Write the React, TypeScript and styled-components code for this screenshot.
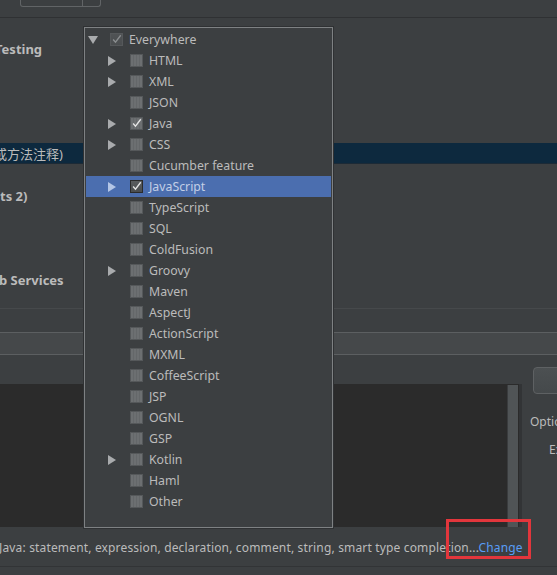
import React from 'react';
import styled, { createGlobalStyle } from 'styled-components';

const GlobalStyle = createGlobalStyle`
  html, body {
    margin: 0;
    padding: 0;
    background: #3c3f41;
  }
`;

type ScopeItem = {
  name: string;
  level: number;
  arrow?: 'right' | 'down';
  checked?: boolean;
  dim?: boolean;
  selected?: boolean;
};

const scopes: ScopeItem[] = [
  { name: 'Everywhere', level: 0, arrow: 'down', checked: true, dim: true },
  { name: 'HTML', level: 1, arrow: 'right' },
  { name: 'XML', level: 1, arrow: 'right' },
  { name: 'JSON', level: 1 },
  { name: 'Java', level: 1, arrow: 'right', checked: true },
  { name: 'CSS', level: 1, arrow: 'right' },
  { name: 'Cucumber feature', level: 1 },
  { name: 'JavaScript', level: 1, arrow: 'right', checked: true, selected: true },
  { name: 'TypeScript', level: 1 },
  { name: 'SQL', level: 1 },
  { name: 'ColdFusion', level: 1 },
  { name: 'Groovy', level: 1, arrow: 'right' },
  { name: 'Maven', level: 1 },
  { name: 'AspectJ', level: 1 },
  { name: 'ActionScript', level: 1 },
  { name: 'MXML', level: 1 },
  { name: 'CoffeeScript', level: 1 },
  { name: 'JSP', level: 1 },
  { name: 'OGNL', level: 1 },
  { name: 'GSP', level: 1 },
  { name: 'Kotlin', level: 1, arrow: 'right' },
  { name: 'Haml', level: 1 },
  { name: 'Other', level: 1 },
];

// 왼쪽 설정 트리 (팝업 뒤에 가려진 부분)
const treeRows: { text?: string; bold?: boolean; selected?: boolean; shift?: number }[] = [
  { text: 'Testing', bold: true, shift: -5 },
  {},
  {},
  {},
  {},
  { text: '或方法注释)', selected: true, shift: -6 },
  {},
  { text: 'ts 2)', bold: true, shift: 0 },
  {},
  {},
  {},
  { text: 'b Services', bold: true, shift: -1 },
];

const Arrow = ({ dir, light }: { dir?: 'right' | 'down'; light?: boolean }) => {
  if (!dir) return null;
  const fill = light ? '#b4c6e6' : '#a9abad';
  return dir === 'down' ? (
    <svg width="10" height="8" viewBox="0 0 10 8">
      <polygon points="0,0 10,0 5,8" fill={fill} />
    </svg>
  ) : (
    <svg width="8" height="10" viewBox="0 0 8 10">
      <polygon points="0,0 8,5 0,10" fill={fill} />
    </svg>
  );
};

const App = () => {
  return (
    <Screen>
      <GlobalStyle />
      <TopBar>
        <ComboStub>
          <ComboDivider />
        </ComboStub>
      </TopBar>

      <SettingsTree>
        {treeRows.map((row, i) => (
          <TreeRow key={i} $selected={row.selected}>
            {row.text && (
              <TreeLabel $bold={row.bold} style={{ marginLeft: row.shift }}>
                {row.text}
              </TreeLabel>
            )}
          </TreeRow>
        ))}
      </SettingsTree>

      <Separator />
      <Band />

      <Lower>
        <EditorColumn>
          <Editor>
            <Scrollbar />
          </Editor>
        </EditorColumn>
        <SidePanel>
          <SideButton />
          <SideLabel $indent={-3} $top={19}>
            Options
          </SideLabel>
          <SideLabel $indent={16} $top={11}>
            Ex
          </SideLabel>
        </SidePanel>
      </Lower>

      <StatusRow>
        <StatusText>
          Java: statement, expression, declaration, comment, string, smart type completion...
          <ChangeLink>Change</ChangeLink>
        </StatusText>
      </StatusRow>

      <ScopePopup>
        {scopes.map((s) => (
          <ScopeRow key={s.name} $level={s.level} $selected={s.selected}>
            <ArrowSlot>
              <Arrow dir={s.arrow} light={s.selected} />
            </ArrowSlot>
            <CheckBox $dim={s.dim} $selected={s.selected}>
              {s.checked && (
                <svg width="13" height="13" viewBox="0 0 13 13">
                  <path
                    d="M2.5 6.5 L5.3 9.6 L11.5 1.5"
                    fill="none"
                    stroke={s.dim ? '#8a8d8f' : '#e4e4e4'}
                    strokeWidth="1.6"
                  />
                </svg>
              )}
            </CheckBox>
            <ScopeName $selected={s.selected} $dim={s.dim}>
              {s.name}
            </ScopeName>
          </ScopeRow>
        ))}
      </ScopePopup>

      <Highlight />
    </Screen>
  );
};

export default App;

const Screen = styled.div`
  position: relative;
  width: 557px;
  height: 575px;
  overflow: hidden;
  background: #3c3f41;
  font-family: 'Noto Sans', 'Noto Sans CJK SC', sans-serif;
  color: #bbbbbb;
`;

const TopBar = styled.div`
  height: 17px;
  border-bottom: 1px solid #2f3133;
  display: flex;
  align-items: flex-start;
`;

const ComboStub = styled.div`
  margin-left: 20px;
  width: 79px;
  height: 6px;
  border: 1px solid #616466;
  border-top: none;
  border-radius: 0 0 3px 3px;
`;

const ComboDivider = styled.div`
  margin-left: 61px;
  width: 1px;
  height: 6px;
  background: #616466;
`;

const SettingsTree = styled.div`
  padding-top: 20px;
  height: 270px;
`;

const TreeRow = styled.div<{ $selected?: boolean }>`
  height: 21px;
  display: flex;
  align-items: center;
  background: ${(p) => (p.$selected ? '#0d293e' : 'transparent')};
  border-bottom: ${(p) => (p.$selected ? '1px solid #1c2a36' : 'none')};
  box-sizing: border-box;
`;

const TreeLabel = styled.span<{ $bold?: boolean }>`
  font-size: 13px;
  font-weight: ${(p) => (p.$bold ? 700 : 400)};
  white-space: nowrap;
  color: #bbbbbb;
`;

const Separator = styled.div`
  height: 1px;
  background: #46494b;
`;

const Band = styled.div`
  margin-top: 23px;
  height: 21px;
  background: #45484a;
  border-top: 1px solid #5c5f61;
  border-bottom: 1px solid #5c5f61;
`;

const Lower = styled.div`
  display: flex;
  height: 172px;
`;

const EditorColumn = styled.div`
  width: 522px;
  padding-top: 29px;
  box-sizing: border-box;
`;

const Editor = styled.div`
  height: 143px;
  background: #2b2b2b;
  border-right: 3px solid #323436;
  display: flex;
  justify-content: flex-end;
  padding-top: 1px;
  box-sizing: border-box;
`;

const Scrollbar = styled.div`
  width: 10px;
  margin-right: 1px;
  height: 100%;
  background: #505456;
  border-left: 1px solid #3a3c3e;
`;

const SidePanel = styled.div`
  flex: 1;
  padding-left: 11px;
  padding-top: 12px;
  display: flex;
  flex-direction: column;
  overflow: hidden;
`;

const SideButton = styled.div`
  width: 60px;
  height: 25px;
  border: 1px solid #5e6163;
  border-radius: 4px;
  background: linear-gradient(#4c5052, #45494b);
  flex-shrink: 0;
`;

const SideLabel = styled.div<{ $indent: number; $top: number }>`
  margin-left: ${(p) => p.$indent}px;
  margin-top: ${(p) => p.$top}px;
  font-size: 12px;
  white-space: nowrap;
  color: #bbbbbb;
`;

const StatusRow = styled.div`
  height: 40px;
  display: flex;
  align-items: center;
  border-bottom: 1px solid #323436;
  box-sizing: border-box;
`;

const StatusText = styled.div`
  margin-left: -1px;
  margin-top: 1px;
  font-size: 12px;
  letter-spacing: 0.16px;
  white-space: nowrap;
  color: #bbbbbb;
`;

const ChangeLink = styled.span`
  color: #589df6;
`;

const ScopePopup = styled.div`
  position: absolute;
  left: 84px;
  top: 27px;
  width: 249px;
  height: 501px;
  box-sizing: border-box;
  padding: 1px 1px 0;
  background: #3c3f41;
  border: 1px solid #7e8183;
  box-shadow: 0 0 0 1px #2f3133;
`;

const ScopeRow = styled.div<{ $level: number; $selected?: boolean }>`
  height: 21px;
  display: flex;
  align-items: center;
  padding-left: ${(p) => 2 + p.$level * 20}px;
  background: ${(p) => (p.$selected ? '#4b6eaf' : 'transparent')};
`;

const ArrowSlot = styled.span`
  width: 22px;
  display: flex;
  align-items: center;
  flex-shrink: 0;
`;

const CheckBox = styled.span<{ $dim?: boolean; $selected?: boolean }>`
  width: 13px;
  height: 13px;
  box-sizing: border-box;
  flex-shrink: 0;
  display: flex;
  align-items: center;
  justify-content: center;
  border: 1px solid ${(p) => (p.$selected ? '#2b2b2b' : '#55585a')};
  background: ${(p) =>
    p.$dim
      ? 'linear-gradient(#505355, #4a4d4f)'
      : p.$selected
      ? 'linear-gradient(#5a5d5f, #4a4d4f)'
      : 'repeating-linear-gradient(90deg, #6c6f71 0px, #6c6f71 2px, #646769 2px, #646769 3px)'};
  svg {
    display: block;
  }
`;

const ScopeName = styled.span<{ $selected?: boolean; $dim?: boolean }>`
  margin-left: 6px;
  font-size: 12.3px;
  white-space: nowrap;
  color: ${(p) => (p.$selected ? '#c3cfe6' : '#bbbbbb')};
`;

const Highlight = styled.div`
  position: absolute;
  left: 446px;
  top: 519px;
  width: 85px;
  height: 40px;
  box-sizing: border-box;
  border: 3px solid #e2363c;
`;
